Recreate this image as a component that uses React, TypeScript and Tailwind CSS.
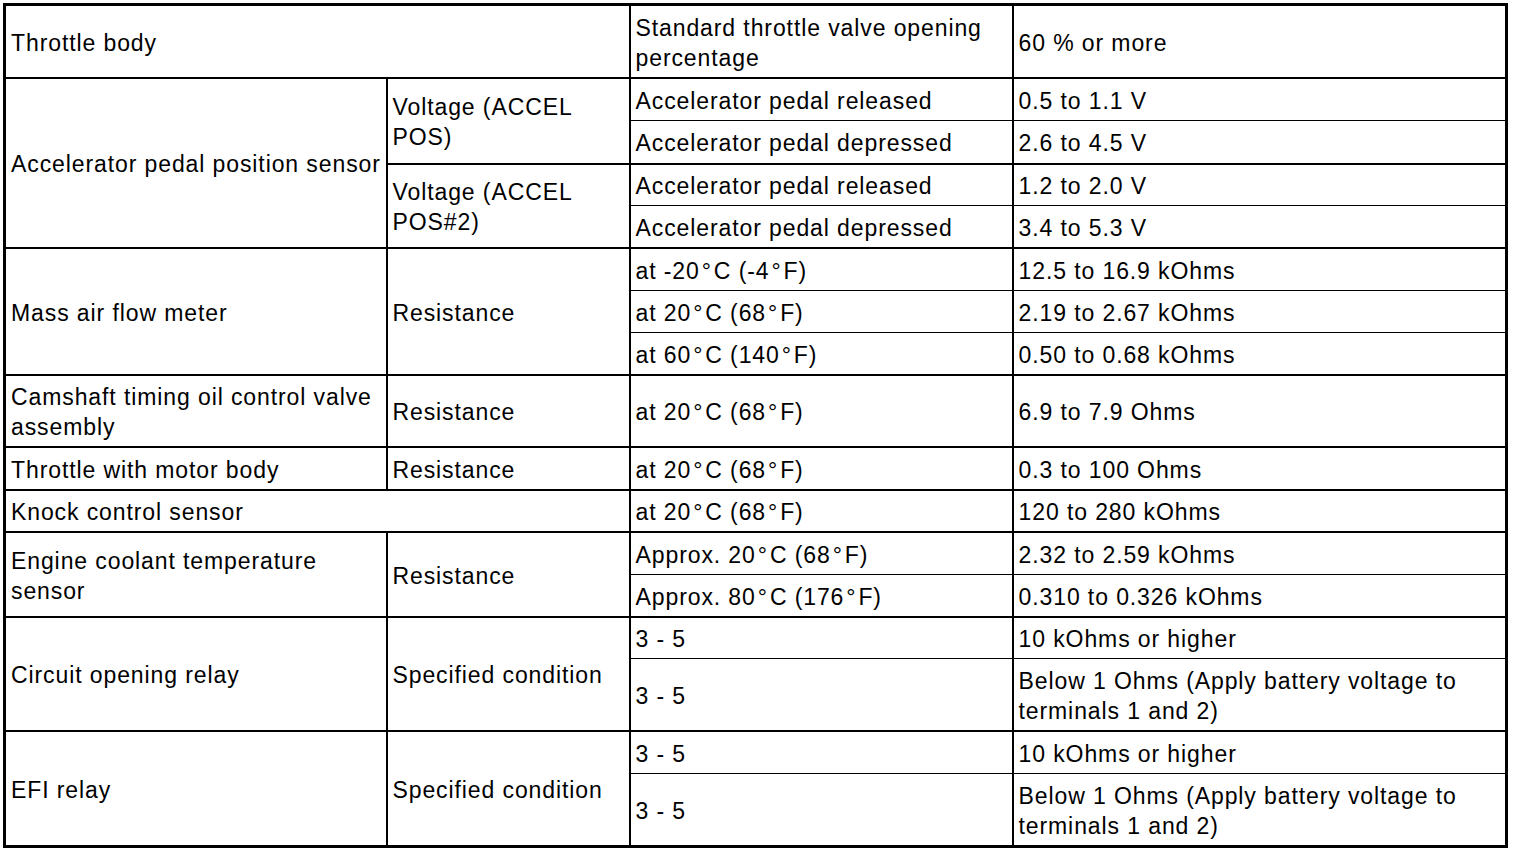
import type { ReactNode } from 'react';

type CellProps = {
  children: ReactNode;
  rowSpan?: number;
  colSpan?: number;
  thick?: boolean;
};

function Td({ children, rowSpan, colSpan, thick }: CellProps) {
  return (
    <td
      rowSpan={rowSpan}
      colSpan={colSpan}
      className={
        thick
          ? "border-x-2 border-t-2 border-b border-black pl-[5px] pr-[4px] pt-[6px] pb-[3px] align-middle whitespace-nowrap"
          : "border-x-2 border-y border-black pl-[5px] pr-[4px] pt-[6px] pb-[3px] align-middle whitespace-nowrap"
      }
    >
      {children}
    </td>
  );
}

// degree sign sits a little apart from the digits in the source sheet
const D = () => <span className="mx-[2px]">°</span>;

const below = <>Below 1 Ohms (Apply battery voltage to<br />terminals 1 and 2)</>;

export default function App() {
  return (
    <div className="min-h-screen bg-white pt-[3px] pl-[3px]">
      <table
        className="table-fixed border-collapse border-[3px] border-black text-black text-[23px] leading-[30px] tracking-[0.9px] w-[1502px]"
        style={{ fontFamily: '"Liberation Sans", Arial, sans-serif' }}
      >
        <colgroup>
          <col className="w-[382px]" />
          <col className="w-[243px]" />
          <col className="w-[383px]" />
          <col className="w-[494px]" />
        </colgroup>
        <tbody>
          <tr className="h-[73px]">
            <Td colSpan={2} thick>Throttle body</Td>
            <Td thick>Standard throttle valve opening<br />percentage</Td>
            <Td thick>60 % or more</Td>
          </tr>
          <tr className="h-[43px]">
            <Td rowSpan={4} thick>Accelerator pedal position sensor</Td>
            <Td rowSpan={2} thick>Voltage (ACCEL<br />POS)</Td>
            <Td thick>Accelerator pedal released</Td>
            <Td thick>0.5 to 1.1 V</Td>
          </tr>
          <tr className="h-[43px]">
            <Td>Accelerator pedal depressed</Td>
            <Td>2.6 to 4.5 V</Td>
          </tr>
          <tr className="h-[42px]">
            <Td rowSpan={2} thick>Voltage (ACCEL<br />POS#2)</Td>
            <Td thick>Accelerator pedal released</Td>
            <Td thick>1.2 to 2.0 V</Td>
          </tr>
          <tr className="h-[42px]">
            <Td>Accelerator pedal depressed</Td>
            <Td>3.4 to 5.3 V</Td>
          </tr>
          <tr className="h-[43px]">
            <Td rowSpan={3} thick>Mass air flow meter</Td>
            <Td rowSpan={3} thick>Resistance</Td>
            <Td thick>at -20<D />C (-4<D />F)</Td>
            <Td thick>12.5 to 16.9 kOhms</Td>
          </tr>
          <tr className="h-[42px]">
            <Td>at 20<D />C (68<D />F)</Td>
            <Td>2.19 to 2.67 kOhms</Td>
          </tr>
          <tr className="h-[42px]">
            <Td>at 60<D />C (140<D />F)</Td>
            <Td>0.50 to 0.68 kOhms</Td>
          </tr>
          <tr className="h-[72px]">
            <Td thick>Camshaft timing oil control valve<br />assembly</Td>
            <Td thick>Resistance</Td>
            <Td thick>at 20<D />C (68<D />F)</Td>
            <Td thick>6.9 to 7.9 Ohms</Td>
          </tr>
          <tr className="h-[43px]">
            <Td thick>Throttle with motor body</Td>
            <Td thick>Resistance</Td>
            <Td thick>at 20<D />C (68<D />F)</Td>
            <Td thick>0.3 to 100 Ohms</Td>
          </tr>
          <tr className="h-[42px]">
            <Td colSpan={2} thick>Knock control sensor</Td>
            <Td thick>at 20<D />C (68<D />F)</Td>
            <Td thick>120 to 280 kOhms</Td>
          </tr>
          <tr className="h-[43px]">
            <Td rowSpan={2} thick>Engine coolant temperature<br />sensor</Td>
            <Td rowSpan={2} thick>Resistance</Td>
            <Td thick>Approx. 20<D />C (68<D />F)</Td>
            <Td thick>2.32 to 2.59 kOhms</Td>
          </tr>
          <tr className="h-[42px]">
            <Td>Approx. 80<D />C (176<D />F)</Td>
            <Td>0.310 to 0.326 kOhms</Td>
          </tr>
          <tr className="h-[42px]">
            <Td rowSpan={2} thick>Circuit opening relay</Td>
            <Td rowSpan={2} thick>Specified condition</Td>
            <Td thick>3 - 5</Td>
            <Td thick>10 kOhms or higher</Td>
          </tr>
          <tr className="h-[72px]">
            <Td>3 - 5</Td>
            <Td>{below}</Td>
          </tr>
          <tr className="h-[43px]">
            <Td rowSpan={2} thick>EFI relay</Td>
            <Td rowSpan={2} thick>Specified condition</Td>
            <Td thick>3 - 5</Td>
            <Td thick>10 kOhms or higher</Td>
          </tr>
          <tr className="h-[73px]">
            <Td>3 - 5</Td>
            <Td>{below}</Td>
          </tr>
        </tbody>
      </table>
    </div>
  );
}
